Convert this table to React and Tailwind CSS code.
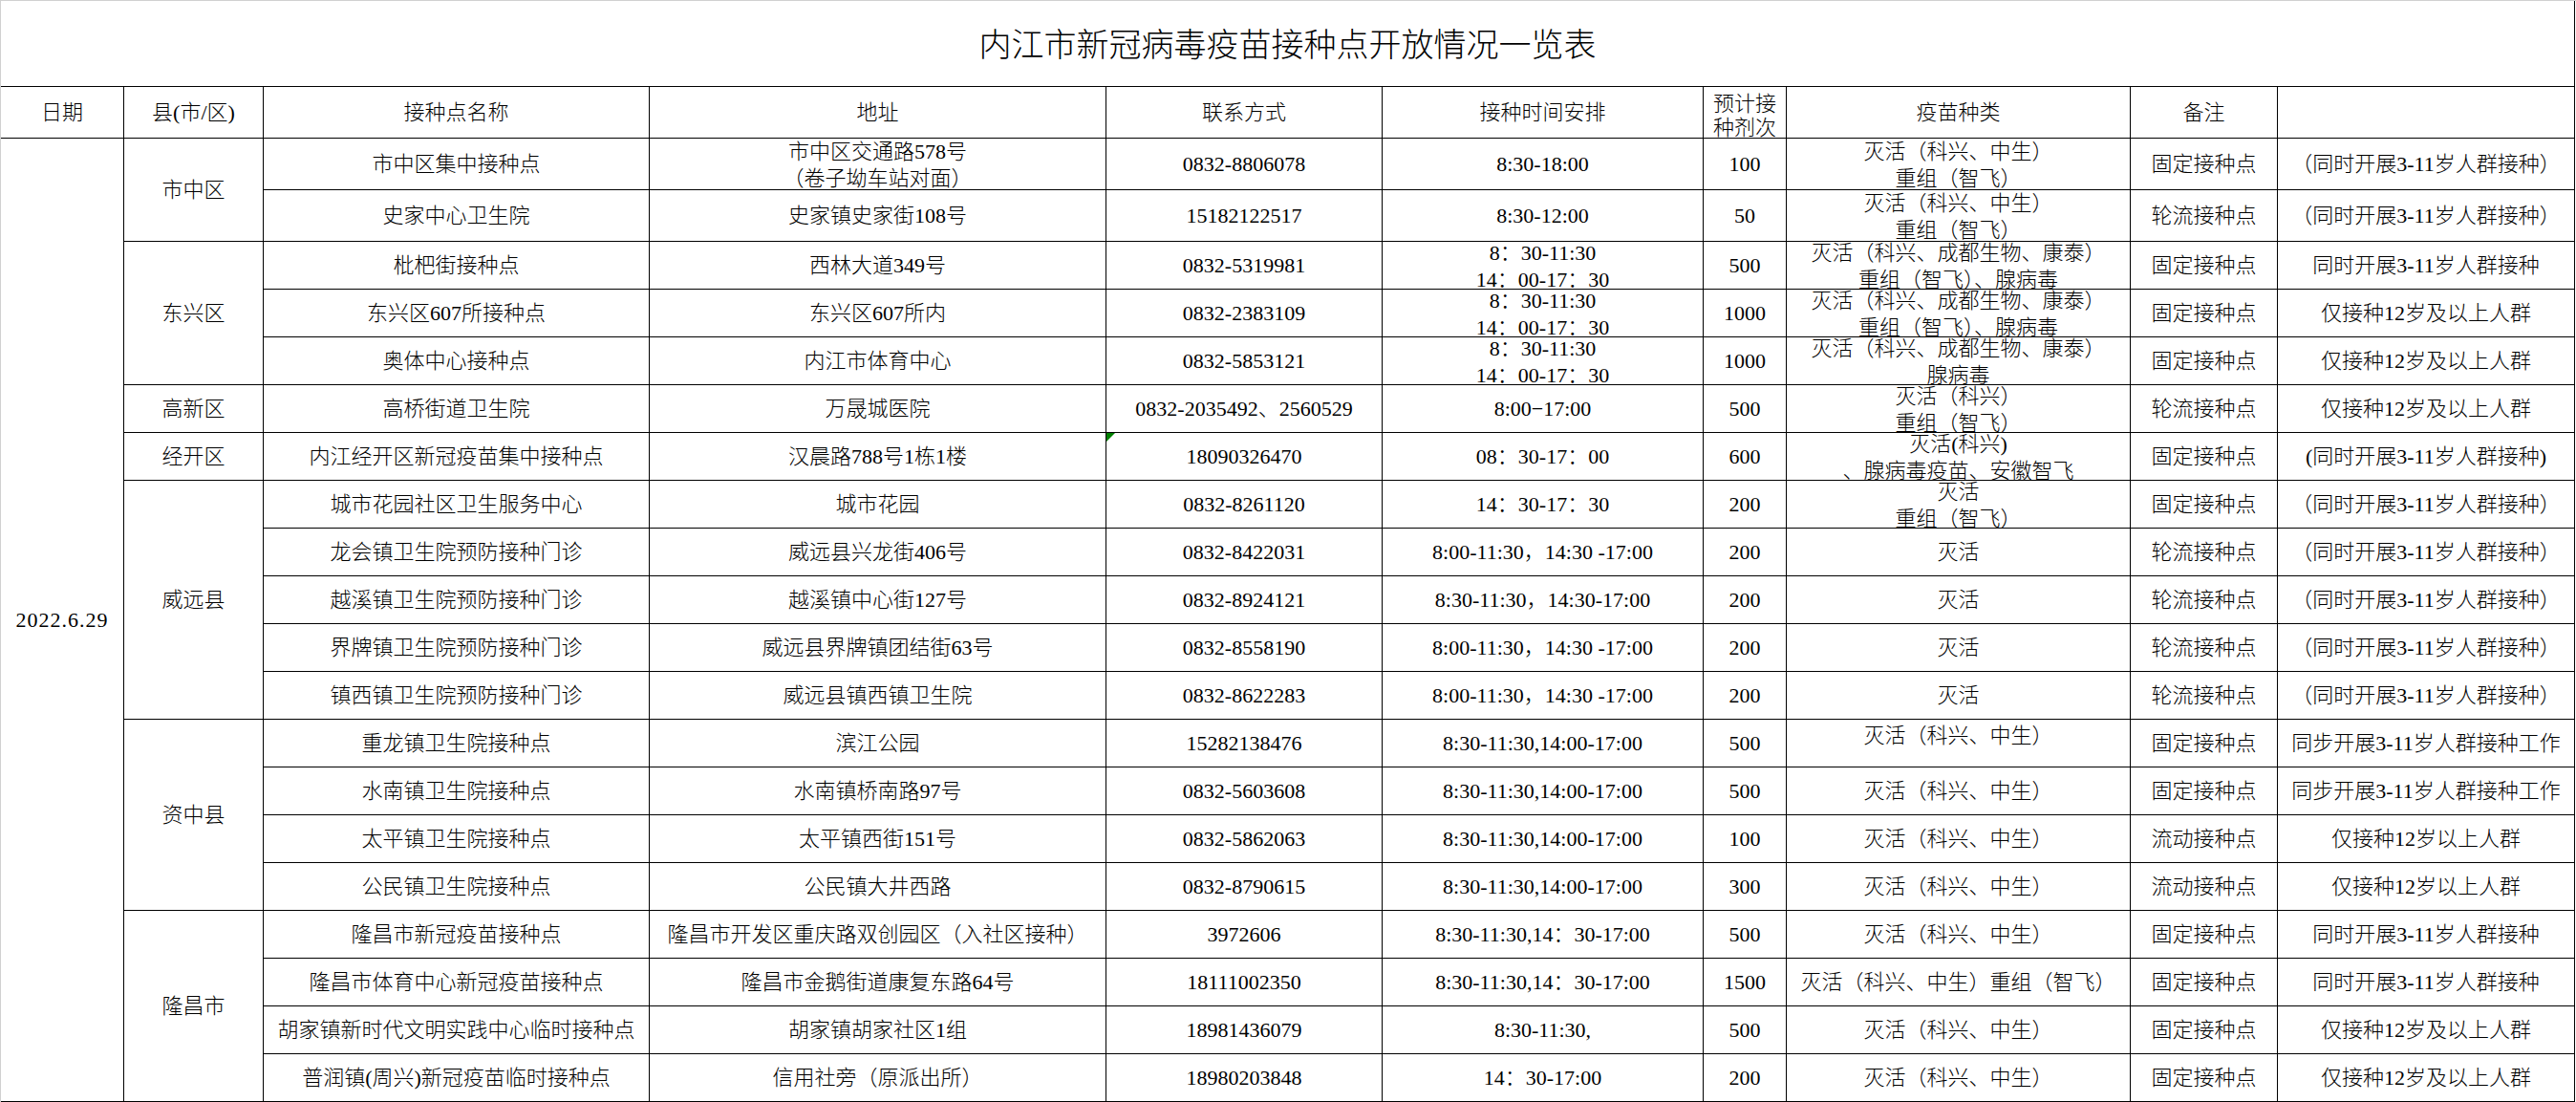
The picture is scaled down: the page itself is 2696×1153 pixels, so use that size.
import clsx from 'clsx'

const FONT = "font-['Liberation_Serif','Noto_Sans_CJK_SC',serif]"

const header = [
  '日期',
  '县(市/区)',
  '接种点名称',
  '地址',
  '联系方式',
  '接种时间安排',
  ['预计接', '种剂次'],
  '疫苗种类',
  '备注',
  '',
]

const SPAN = {
  1: 'row-span-1',
  2: 'row-span-2',
  3: 'row-span-3',
  4: 'row-span-4',
  5: 'row-span-5',
  20: 'row-span-20',
}

const two = ['灭活（科兴、中生）', '重组（智飞）']
const kx = '灭活（科兴、中生）'
const dx = ['8：30-11:30', '14：00-17：30']
const wy = '（同时开展3-11岁人群接种）'

const groups = [
  {
    county: '市中区',
    rows: [
      ['市中区集中接种点', ['市中区交通路578号', '（卷子坳车站对面）'], '0832-8806078', '8:30-18:00', '100', two, '固定接种点', wy],
      ['史家中心卫生院', '史家镇史家街108号', '15182122517', '8:30-12:00', '50', two, '轮流接种点', wy],
    ],
  },
  {
    county: '东兴区',
    rows: [
      ['枇杷街接种点', '西林大道349号', '0832-5319981', dx, '500', ['灭活（科兴、成都生物、康泰）', '重组（智飞）、腺病毒'], '固定接种点', '同时开展3-11岁人群接种'],
      ['东兴区607所接种点', '东兴区607所内', '0832-2383109', dx, '1000', ['灭活（科兴、成都生物、康泰）', '重组（智飞）、腺病毒'], '固定接种点', '仅接种12岁及以上人群'],
      ['奥体中心接种点', '内江市体育中心', '0832-5853121', dx, '1000', ['灭活（科兴、成都生物、康泰）', '腺病毒'], '固定接种点', '仅接种12岁及以上人群'],
    ],
  },
  {
    county: '高新区',
    rows: [
      ['高桥街道卫生院', '万晟城医院', '0832-2035492、2560529', '8:00−17:00', '500', ['灭活（科兴）', '重组（智飞）'], '轮流接种点', '仅接种12岁及以上人群'],
    ],
  },
  {
    county: '经开区',
    rows: [
      ['内江经开区新冠疫苗集中接种点', '汉晨路788号1栋1楼', '18090326470', '08：30-17：00', '600', ['灭活(科兴)', '、腺病毒疫苗、安徽智飞'], '固定接种点', '(同时开展3-11岁人群接种)', true],
    ],
  },
  {
    county: '威远县',
    rows: [
      ['城市花园社区卫生服务中心', '城市花园', '0832-8261120', '14：30-17：30', '200', ['灭活', '重组（智飞）'], '固定接种点', wy],
      ['龙会镇卫生院预防接种门诊', '威远县兴龙街406号', '0832-8422031', '8:00-11:30，14:30 -17:00', '200', '灭活', '轮流接种点', wy],
      ['越溪镇卫生院预防接种门诊', '越溪镇中心街127号', '0832-8924121', '8:30-11:30，14:30-17:00', '200', '灭活', '轮流接种点', wy],
      ['界牌镇卫生院预防接种门诊', '威远县界牌镇团结街63号', '0832-8558190', '8:00-11:30，14:30 -17:00', '200', '灭活', '轮流接种点', wy],
      ['镇西镇卫生院预防接种门诊', '威远县镇西镇卫生院', '0832-8622283', '8:00-11:30，14:30 -17:00', '200', '灭活', '轮流接种点', wy],
    ],
  },
  {
    county: '资中县',
    rows: [
      ['重龙镇卫生院接种点', '滨江公园', '15282138476', '8:30-11:30,14:00-17:00', '500', [kx, ''], '固定接种点', '同步开展3-11岁人群接种工作'],
      ['水南镇卫生院接种点', '水南镇桥南路97号', '0832-5603608', '8:30-11:30,14:00-17:00', '500', kx, '固定接种点', '同步开展3-11岁人群接种工作'],
      ['太平镇卫生院接种点', '太平镇西街151号', '0832-5862063', '8:30-11:30,14:00-17:00', '100', kx, '流动接种点', '仅接种12岁以上人群'],
      ['公民镇卫生院接种点', '公民镇大井西路', '0832-8790615', '8:30-11:30,14:00-17:00', '300', kx, '流动接种点', '仅接种12岁以上人群'],
    ],
  },
  {
    county: '隆昌市',
    rows: [
      ['隆昌市新冠疫苗接种点', '隆昌市开发区重庆路双创园区（入社区接种）', '3972606', '8:30-11:30,14：30-17:00', '500', kx, '固定接种点', '同时开展3-11岁人群接种'],
      ['隆昌市体育中心新冠疫苗接种点', '隆昌市金鹅街道康复东路64号', '18111002350', '8:30-11:30,14：30-17:00', '1500', '灭活（科兴、中生）重组（智飞）', '固定接种点', '同时开展3-11岁人群接种'],
      ['胡家镇新时代文明实践中心临时接种点', '胡家镇胡家社区1组', '18981436079', '8:30-11:30,', '500', kx, '固定接种点', '仅接种12岁及以上人群'],
      ['普润镇(周兴)新冠疫苗临时接种点', '信用社旁（原派出所）', '18980203848', '14：30-17:00', '200', kx, '固定接种点', '仅接种12岁及以上人群'],
    ],
  },
]

function Cell({ text, className, lineClass = 'h-[28px] leading-[28px]', children }) {
  const lines = Array.isArray(text) ? text : [text]
  return (
    <div
      className={clsx(
        'relative flex flex-col items-center justify-center overflow-hidden whitespace-nowrap border-b border-r border-black text-center',
        className
      )}
    >
      {lines.map((l, i) => (
        <div key={i} className={lineClass}>
          {l}
        </div>
      ))}
      {children}
    </div>
  )
}

export default function App() {
  return (
    <div className={clsx('h-[1153px] w-[2696px] border-l border-t border-[#d0d0d0] bg-white text-[22px] font-light text-black', FONT)}>
      <div className="flex h-[89px] w-[2694px] items-center justify-center border-r border-black pt-[4px] text-[34px]">
        内江市新冠病毒疫苗接种点开放情况一览表
      </div>

      <div className="grid w-[2694px] grid-cols-[129px_146px_404px_478px_289px_336px_87px_360px_154px_311px] grid-rows-[54px_54px_54px_repeat(18,50px)] border-t border-black">
        {header.map((h, i) => (
          <Cell
            key={'h' + i}
            text={h}
            className={Array.isArray(h) ? 'pt-[6px]' : ''}
            lineClass={Array.isArray(h) ? 'h-[25px] leading-[25px]' : undefined}
          />
        ))}

        <Cell className={SPAN[20]} text="2022.6.29" lineClass="tracking-[1px]" />

        {groups.map((g) => [
          <Cell key={g.county} className={SPAN[g.rows.length]} text={g.county} />,
          ...g.rows.map((r, ri) =>
            r.slice(0, 8).map((v, ci) => (
              <Cell key={g.county + ri + '-' + ci} text={v} className={Array.isArray(v) ? 'pt-[3px]' : ''}>
                {ci === 2 && r[8] && (
                  <svg className="absolute left-0 top-0" width="9" height="9" viewBox="0 0 9 9">
                    <polygon points="0,0 9,0 0,9" fill="#008000" />
                  </svg>
                )}
              </Cell>
            ))
          ),
        ])}
      </div>
    </div>
  )
}
